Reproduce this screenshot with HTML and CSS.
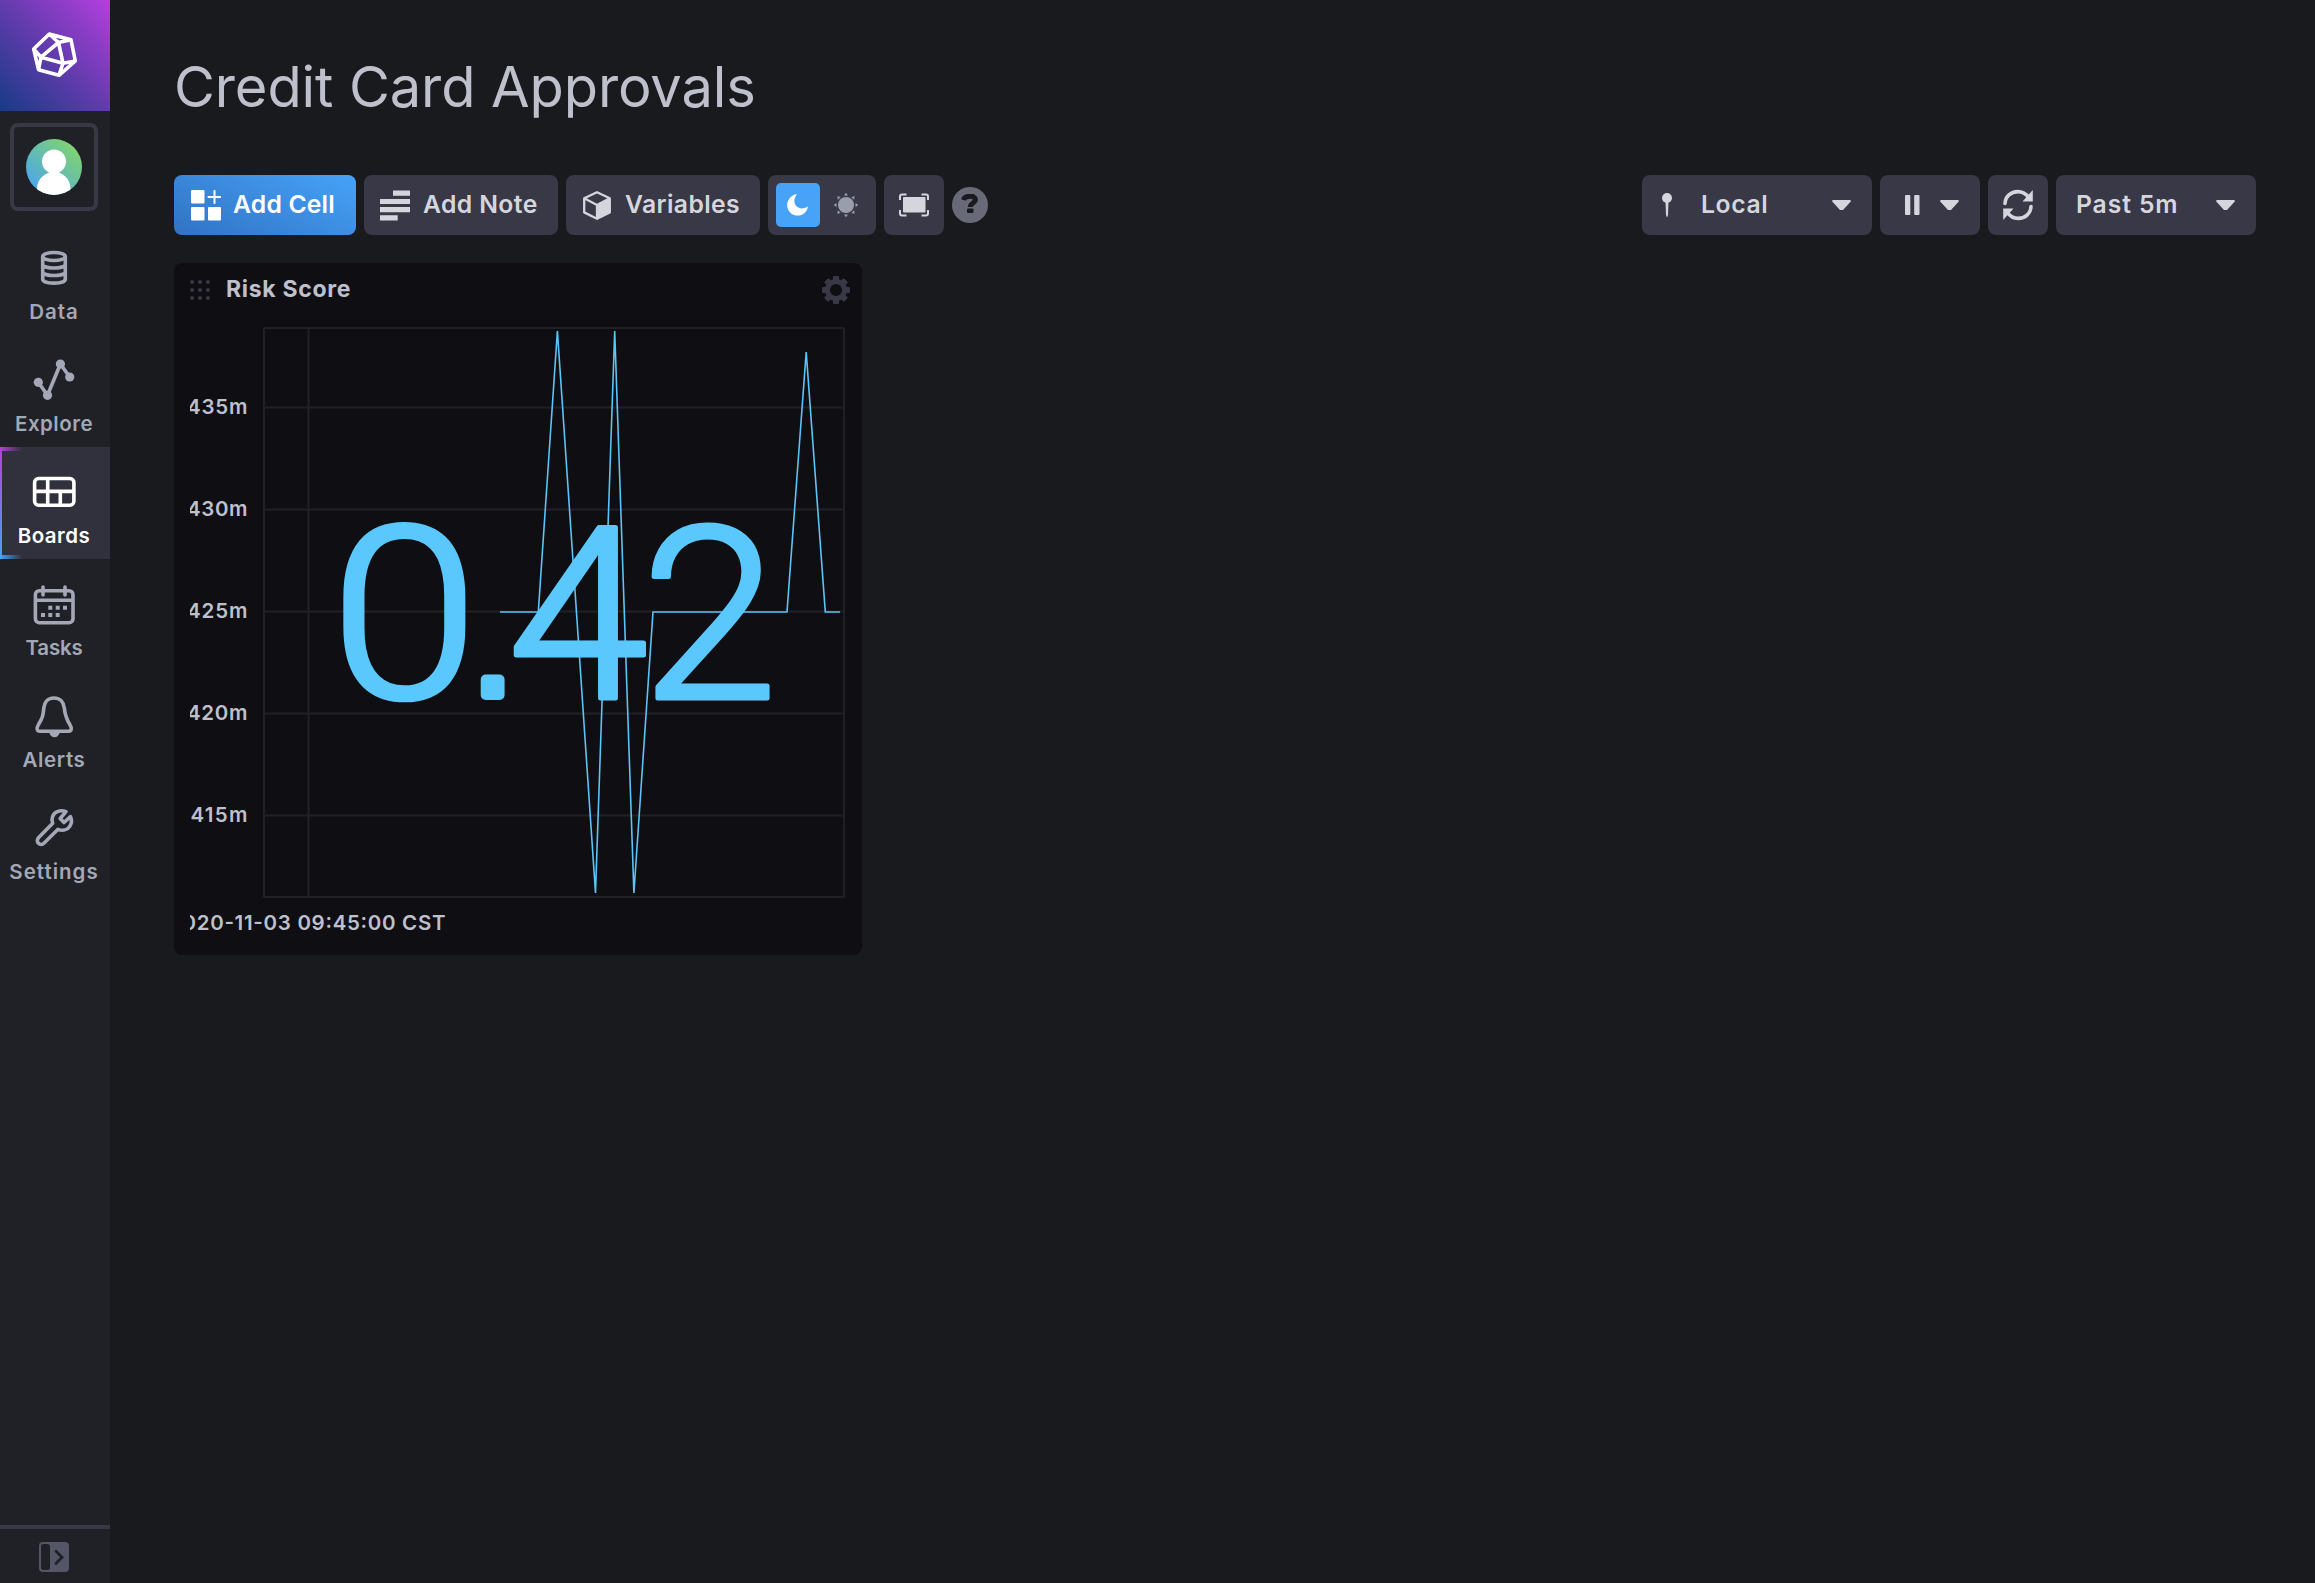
FILE: index.html
```html
<!DOCTYPE html>
<html lang="en">
<head>
<meta charset="utf-8">
<title>Credit Card Approvals</title>
<link rel="stylesheet" href="styles.css">
</head>
<body>
<div class="app">
  <nav class="sidebar">
    <a class="logo"><svg width="110" height="111" viewBox="0 0 110 111"><path d="M49.3 34 71 39.8 75.3 61 59 75.300 38.500 69.700 33.700 49ZM49.300 34 58.500 42.500 71 39.800M33.700 49 41 57.200 38.500 69.700M75.300 61 63 63.200 59 75.300M58.500 42.500 41 57.200 63 63.200Z"/></svg></a>
    <a class="user"><svg width="56" height="56" viewBox="0 0 56 56"><defs><linearGradient id="av" x1="0" y1="1" x2="1" y2="0"><stop offset=".1" stop-color="#4aa6ec"/><stop offset=".9" stop-color="#82d56b"/></linearGradient><clipPath id="ac"><circle cx="28" cy="28" r="28"/></clipPath></defs><circle cx="28" cy="28" r="28" fill="url(#av)"/><g fill="#fff" clip-path="url(#ac)"><circle cx="28" cy="22.500" r="12"/><path d="M11 56V50C11 39 20 33 28 33S44.500 39 44.500 50V56Z"/></g></svg></a>
    <a class="item"><svg class="ico" viewBox="0 0 44 44"><g class="ln"><ellipse cx="22" cy="10.500" rx="11.300" ry="4"/><path d="M10.700 10.500V33c0 5.500 22.600 5.500 22.600 0V10.500M10.700 18.200c0 5 22.600 5 22.600 0M10.700 25.700c0 5 22.600 5 22.600 0"/></g></svg><span class="w-data">Data</span></a>
    <a class="item"><svg class="ico" viewBox="0 0 44 44"><path class="ln" d="M6.300 24.300 15.500 37.300 28.400 6 37.700 19"/><g fill="currentColor"><circle cx="6.300" cy="24.300" r="4.600"/><circle cx="15.500" cy="37.300" r="4.600"/><circle cx="28.400" cy="6" r="4.600"/><circle cx="37.700" cy="19" r="4.600"/></g></svg><span class="w-explore">Explore</span></a>
    <a class="item active"><svg class="ico" viewBox="0 0 44 44"><rect class="ln" x="2.600" y="8.500" width="39.300" height="26.700" rx="4"/><path class="ln" d="M2.600 21.400H42M15.700 8.500V35M28.300 21.400V35"/></svg><span class="w-explore">Boards</span></a>
    <a class="item"><svg class="ico" viewBox="0 0 44 44"><rect class="ln" x="3.400" y="8.700" width="37.600" height="32" rx="4"/><path class="ln" d="M3.400 18.300H41"/><path class="ln cap" d="M11 5V13M33 5V13"/><path fill="currentColor" d="M16.300 23.700h4v4h-4zM23.700 23.700h4v4h-4zM31 23.700h4v4h-4zM9 31h4v4H9zM16.300 31h4v4h-4zM23.700 31h4v4h-4z"/></svg><span class="w-tasks">Tasks</span></a>
    <a class="item"><svg class="ico" viewBox="0 0 44 44"><path class="ln" d="M22 4C15.500 4 12.300 8.500 11.800 14 11.300 21 10.500 24 6.500 30.500 4 34.500 5 37.300 8 37.300H36.500C39.500 37.300 40.300 34.500 37.800 30.500 33.800 24 33 21 32.300 14 31.700 8.500 28.500 4 22 4Z"/><path fill="currentColor" d="M17 38H28C27 41.500 25 43.200 22.500 43.200S18 41.500 17 38Z"/></svg><span class="w-alerts">Alerts</span></a>
    <a class="item"><svg class="ico" viewBox="0 0 44 44"><path class="ln" d="M34 5.700C28.500 3.500 22.500 5.500 20.600 10.500 19.700 13 19.900 15.500 20.700 17.300L6.700 31.500C2.800 35.500 8 41 12.200 37L26 23.300C30.500 25.200 35.500 24 38 20 39.800 17 39.800 13.500 38.500 10.700L32 16.500 28.200 12.500Z"/></svg><span class="w-settings">Settings</span></a>
    <div class="collapse"><svg width="30" height="30" viewBox="0 0 30 30"><rect width="30" height="30" rx="4" fill="#545667"/><rect x="2" y="2" width="9" height="26" rx="2.500" fill="#202127"/><path d="M17 9.200 23 15.300 17 21.400" fill="none" stroke="#202127" stroke-width="2.800" stroke-linecap="round"/></svg></div>
  </nav>
  <main class="page">
    <h1 class="title">Credit Card Approvals</h1>
    <div class="toolbar">
      <div class="group">
        <button class="btn primary w182"><svg width="30" height="31" viewBox="0 0 30 31"><path fill="#fff" d="M1 0h11.500a1 1 0 0 1 1 1v11.500a1 1 0 0 1-1 1H1a1 1 0 0 1-1-1V1a1 1 0 0 1 1-1zM1 17h11.500a1 1 0 0 1 1 1v11.500a1 1 0 0 1-1 1H1a1 1 0 0 1-1-1V18a1 1 0 0 1 1-1zM18 17h11a1 1 0 0 1 1 1v11.500a1 1 0 0 1-1 1H18a1 1 0 0 1-1-1V18a1 1 0 0 1 1-1z"/><path d="M17.500 6.900H29.500M23.500 .9V12.900" stroke="#fff" stroke-width="2" stroke-linecap="round"/></svg><span class="w-cell">Add Cell</span></button>
        <button class="btn w194"><svg width="30" height="31" viewBox="0 0 30 31"><path fill="currentColor" d="M13 .5H30V5.700H13zM0 9H30V14H0zM0 17H30V22.200H0zM0 25.200H17.700V30.500H0z"/></svg><span class="w-note">Add Note</span></button>
        <button class="btn w194"><svg width="30" height="31" viewBox="0 0 30 31"><path d="M15 2.200 27.800 8.200V22.400L15 28.800 2.200 22.400V8.200ZM2.200 8.200 15 15 27.800 8.200M15 15V28.800" fill="none" stroke="currentColor" stroke-width="2.300" stroke-linejoin="round"/><path d="M15 15 28 8.200V22.400L15 29Z" fill="currentColor"/></svg><span class="w-note">Variables</span></button>
        <div class="toggle"><button class="on"><svg width="22" height="22" viewBox="0 0 22 22"><path fill="#fff" d="M10 0C3 9 11 18.500 21 12.500 20 18 16 21.600 10.800 21.600 4.800 21.600 .2 17 .2 11.200 .2 5.500 4.500 1 10 0Z"/></svg></button><button><svg width="26" height="26" viewBox="-13 -13 26 26"><circle r="8" fill="#9a9dab"/><path fill="#9a9dab" d="M-2-9.500H2L0-12.300ZM-2 9.500H2L0 12.300ZM-9.500-2V2L-12.300 0ZM9.500-2V2L12.300 0ZM5.300-8.100 8.100-5.300 8.700-8.700ZM-5.300-8.100-8.100-5.300-8.700-8.700ZM5.300 8.100 8.100 5.300 8.700 8.700ZM-5.300 8.100-8.100 5.300-8.700 8.700Z"/></svg></button></div>
        <button class="btn square"><svg width="30" height="24" viewBox="0 0 30 24"><rect x="4" y="4" width="22.500" height="15.500" rx="1" fill="currentColor"/><path fill="none" stroke="currentColor" stroke-width="2" d="M7.500 1.500H3Q1 1.500 1 3.500V7M22.500 1.500H27Q29 1.500 29 3.500V7M7.500 22.500H3Q1 22.500 1 20.500V17M22.500 22.500H27Q29 22.500 29 20.500V17"/></svg></button>
        <div class="help"><svg width="18" height="22" viewBox="0 0 18 22"><path d="M2.500 6C4 1 14.500 .8 14.500 5.800 14.500 9 9.300 9 9.300 13" fill="none" stroke="#191a1e" stroke-width="5"/><rect x="6" y="14.500" width="6.500" height="4.500" rx="1" fill="#191a1e"/></svg></div>
      </div>
      <div class="group">
        <button class="btn drop w230"><svg class="pin" width="10" height="25" viewBox="0 0 10 25"><circle cx="5" cy="5" r="5" fill="currentColor"/><path d="M3.500 8H6.500L6 22 5 24.500 4 22Z" fill="currentColor"/></svg><span class="w-local">Local</span><i class="caret"></i></button>
        <button class="btn drop w100"><svg class="pause" width="15" height="20" viewBox="0 0 15 20"><rect width="5.300" height="20" rx="1" fill="currentColor"/><rect x="9.200" width="5.300" height="20" rx="1" fill="currentColor"/></svg><i class="caret"></i></button>
        <button class="btn square"><svg class="refresh" width="30" height="32" viewBox="0 0 30 32"><g fill="none" stroke="currentColor" stroke-width="3.600" stroke-linecap="round"><path d="M2 14.500C2.300 7.500 8 2.600 14.800 2.600 19.500 2.600 23 4.700 25.500 8.500"/><path d="M28 17.500C27.700 24.500 22 29.400 15.200 29.400 10.500 29.400 7 27.300 4.500 23.500"/></g><path fill="currentColor" d="M29.800 1V12.500H19.500ZM.2 31V19.500H10.500Z"/></svg></button>
        <button class="btn drop w200"><span class="w-past">Past 5m</span><i class="caret"></i></button>
      </div>
    </div>
    <section class="cell">
      <header class="cell-head">
        <svg width="20" height="20" viewBox="0 0 20 20" fill="#383846"><circle cx="2" cy="2" r="2"/><circle cx="10" cy="2" r="2"/><circle cx="18" cy="2" r="2"/><circle cx="2" cy="10" r="2"/><circle cx="10" cy="10" r="2"/><circle cx="18" cy="10" r="2"/><circle cx="2" cy="18" r="2"/><circle cx="10" cy="18" r="2"/><circle cx="18" cy="18" r="2"/></svg>
        <h2>Risk Score</h2>
        <svg class="gear" width="28" height="28" viewBox="-14 -14 28 28"><circle r="8.500" fill="none" stroke="#383846" stroke-width="5"/><g fill="#383846"><rect x="-3" y="-14" width="6" height="28" rx="1"/><rect x="-3" y="-14" width="6" height="28" rx="1" transform="rotate(90)"/><rect x="-3" y="-14" width="6" height="28" rx="1" transform="rotate(45)"/><rect x="-3" y="-14" width="6" height="28" rx="1" transform="rotate(-45)"/></g><circle r="6" fill="#0f0e13"/></svg>
      </header>
      <svg class="chart" width="656" height="640" viewBox="190 315 656 640">
        <path class="grid" d="M264 328H844.500M264 407.500H844M264 509.500H844M264 611.500H844M264 713.500H844M264 815.500H844M264 897H844.500M264 328V897M308.500 328V897M844 328V897"/>
        <g class="tick"><text x="187" y="414" textLength="60.500">435m</text><text x="187" y="516" textLength="60.500">430m</text><text x="187" y="618" textLength="60.500">425m</text><text x="187" y="720" textLength="60.500">420m</text><text x="190.500" y="822" textLength="57">415m</text></g>
        <text class="tick" x="169" y="930" textLength="276.500">2020-11-03 09:45:00 CST</text>
        <polyline class="series" points="500,612 538.300,612 557.400,331 595.500,893 614.700,331 633.900,893 653,612 787,612 806.200,352 825.300,612 840,612"/>
        <g class="stat"><text transform="translate(330.500 697.500) scale(1.110 1)">0</text><text class="dot" x="472.500" y="695">.</text><text transform="translate(508 697.500) scale(1.050 1)">4</text><text transform="translate(641.500 697.500) scale(1.020 1)">2</text></g>
      </svg>
    </section>
  </main>
</div>
</body>
</html>
```
FILE: styles.css
```css
*{box-sizing:border-box}
body{margin:0;background:#191a1e;font-family:Inter,"Liberation Sans",sans-serif;overflow:hidden}
h1,h2{margin:0}
button{border:0;padding:0;margin:0;font:inherit;color:inherit;background:none}
.app{display:flex;height:1583px}
.sidebar{width:110px;flex:none;display:flex;flex-direction:column;background:#202127;color:#a4a8b6}
.logo{height:111px;background:linear-gradient(45deg,#173b85 0%,#633bad 50%,#b43fe0 100%)}
.logo svg{display:block;fill:none;stroke:#fff;stroke-width:3.600;stroke-linejoin:round}
.user{width:88px;height:88px;margin:12px 0 12px 10px;border:4px solid #383846;border-radius:8px;display:flex;align-items:center;justify-content:center}
.item{height:112px;padding:23px 2px 0 0;display:flex;flex-direction:column;align-items:center;font-size:20.500px;font-weight:600;line-height:24px;gap:10px;white-space:nowrap}
.w-data{letter-spacing:.9px}
.w-explore{letter-spacing:.5px}
.w-tasks{letter-spacing:-.2px}
.w-alerts{letter-spacing:.6px}
.w-settings{letter-spacing:1px}
.ico{width:44px;height:44px;flex:none}
.ln{fill:none;stroke:currentColor;stroke-width:3.600;stroke-linejoin:round}
.cap{stroke-linecap:round}
.active{color:#fff;background:linear-gradient(90deg,#b43fe0,transparent) 0 0/22px 4px no-repeat,linear-gradient(90deg,#46a3f8,transparent) 0 100%/22px 4px no-repeat,linear-gradient(#b43fe0,#46a3f8) 0 0/2px 100% no-repeat,#31313d}
.collapse{margin-top:auto;height:58px;border-top:4px solid #383846;padding:13px 0 0 39px}
.collapse svg{display:block}
.page{flex:1;padding:54px 59px 0 64px;min-width:0}
.title{font-size:56px;font-weight:400;line-height:66px;color:#bec0cc;white-space:nowrap;letter-spacing:-.1px}
.toolbar{display:flex;justify-content:space-between;margin-top:55px}
.group{display:flex;gap:8px;align-items:center}
.btn{height:60px;border-radius:8px;background:#383846;color:#d5d6dd;font-size:24.700px;font-weight:600;display:flex;align-items:center;padding:0 0 0 16px;gap:13px;white-space:nowrap}
.btn span{padding-bottom:2px}
.w-cell{letter-spacing:.2px}
.w-note{letter-spacing:.4px}
.w-local{letter-spacing:.6px}
.w-past{letter-spacing:.9px}
.primary{color:#fff;background:linear-gradient(25deg,#3172c4,#46a3f8);padding-left:17px;gap:12px}
.w182{width:182px}
.w194{width:194px}
.w230{width:230px}
.w100{width:100px}
.w200{width:200px}
.square{width:60px;padding:0;justify-content:center}
.toggle{width:108px;height:60px;border-radius:8px;background:#383846;padding:8px;display:flex;gap:4px}
.toggle button{width:44px;height:44px;border-radius:5px;display:flex;align-items:center;justify-content:center}
.toggle .on{background:#46a3f8}
.help{width:36px;height:36px;border-radius:50%;background:#686a78;display:flex;align-items:center;justify-content:center}
.drop{padding:0 21px 0 20px;gap:0}
.drop .caret{margin-left:auto}
.caret{width:19px;height:11px;background:currentColor;clip-path:polygon(5% 0,95% 0,100% 15%,58% 95%,42% 95%,0 15%)}
.pin{margin-right:29px}
.pause{margin-left:5px}
.cell{width:688px;height:692px;margin-top:28px;background:#0f0e13;border-radius:8px;padding:0 0 0 16px}
.cell-head{height:52px;display:flex;align-items:center;padding:2px 12px 0 0}
.cell-head h2{font-size:23px;font-weight:700;color:#bec0cc;margin:-2px 0 0 16px;letter-spacing:.7px}
.gear{margin-left:auto}
.chart{display:block}
.grid{fill:none;stroke:#202127;stroke-width:2}
.tick{font-size:20.500px;font-weight:600;fill:#bec0cc}
.series{fill:none;stroke:#5bc4f8;stroke-width:1.600}
.stat{font-family:Roboto,sans-serif;font-weight:300;font-size:240px;fill:#5ac8fc;stroke:#5ac8fc;stroke-width:5;stroke-linejoin:round}
.dot{font-family:"Liberation Sans",sans-serif;font-size:145px;stroke-width:10}
```
